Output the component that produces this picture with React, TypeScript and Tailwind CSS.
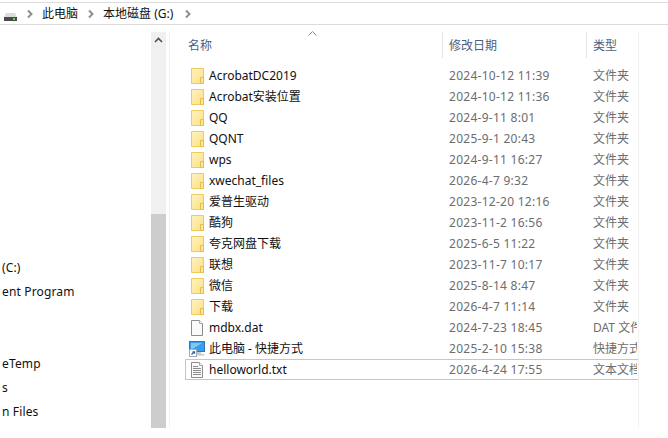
const rows = [
  ["folder", "AcrobatDC2019", "2024-10-12 11:39", "文件夹"],
  ["folder", "Acrobat安装位置", "2024-10-12 11:36", "文件夹"],
  ["folder", "QQ", "2024-9-11 8:01", "文件夹"],
  ["folder", "QQNT", "2025-9-1 20:43", "文件夹"],
  ["folder", "wps", "2024-9-11 16:27", "文件夹"],
  ["folder", "xwechat_files", "2026-4-7 9:32", "文件夹"],
  ["folder", "爱普生驱动", "2023-12-20 12:16", "文件夹"],
  ["folder", "酷狗", "2023-11-2 16:56", "文件夹"],
  ["folder", "夸克网盘下载", "2025-6-5 11:22", "文件夹"],
  ["folder", "联想", "2023-11-7 10:17", "文件夹"],
  ["folder", "微信", "2025-8-14 8:47", "文件夹"],
  ["folder", "下载", "2026-4-7 11:14", "文件夹"],
  ["file", "mdbx.dat", "2024-7-23 18:45", "DAT 文件"],
  ["link", "此电脑 - 快捷方式", "2025-2-10 15:38", "快捷方式"],
  ["text", "helloworld.txt", "2026-4-24 17:55", "文本文档"],
];

const nav = ["(C:)", "ent Program", "", "", "eTemp", "s", "n Files"];

function FolderIcon() {
  return (
    <svg width="16" height="16" viewBox="0 0 16 16" className="shrink-0">
      <defs>
        <linearGradient id="folderFill" x1="0" y1="0" x2="1" y2="1">
          <stop offset="0" stopColor="#fff3c0" />
          <stop offset="1" stopColor="#fbdf83" />
        </linearGradient>
      </defs>
      <path d="M3.5 0.5H15.5V15.5H3.5Z" fill="url(#folderFill)" stroke="#eecb5f" />
      <path d="M12.5 15.5V9.5H15.5V15.5Z" fill="#fde69a" stroke="#e5bd48" />
    </svg>
  );
}

function FileIcon() {
  return (
    <svg width="16" height="16" viewBox="0 0 16 16" className="shrink-0">
      <path d="M3.5 0.5H11.5L14.5 3.5V15.5H3.5Z" fill="#fafafa" stroke="#8c8c8c" />
      <path d="M11.5 0.5V3.5H14.5" fill="#fff" stroke="#a8a8a8" />
    </svg>
  );
}

function TextIcon() {
  return (
    <svg width="16" height="16" viewBox="0 0 16 16" className="shrink-0">
      <path d="M3.5 0.5H11.5L14.5 3.5V15.5H3.5Z" fill="#fafafa" stroke="#8c8c8c" />
      <path d="M11.5 0.5V3.5H14.5" fill="#fff" stroke="#a8a8a8" />
      <path d="M5 4.5H10M5 6.5H13M5 8.5H13M5 10.5H13M5 12.5H13" stroke="#8a8a8a" />
    </svg>
  );
}

function LinkIcon() {
  return (
    <svg width="16" height="16" viewBox="0 0 16 16" className="shrink-0 overflow-visible">
      <rect x="1.5" y="0.5" width="15" height="10" fill="#3d9be8" stroke="#2a78c4" />
      <path d="M3 9V2H14Z" fill="#7cc7f5" />
      <path d="M6 11H13V13H16.5V14.5H5V13H6Z" fill="#c4ccd2" />
      <rect x="1.5" y="8.5" width="7" height="7" fill="#fff" stroke="#a8a8a8" />
      <path d="M3.5 13.5L6 11M4.5 10.8H6.5V12.8" stroke="#1f5fb5" strokeWidth="1.2" fill="none" />
    </svg>
  );
}

function DriveIcon() {
  return (
    <svg width="16" height="16" viewBox="0 0 16 16" className="shrink-0">
      <path d="M3 7H12L14 11H1Z" fill="#dcdcdc" />
      <rect x="1" y="11" width="13" height="4" fill="#4a4a4a" />
      <rect x="10" y="12" width="2" height="2" fill="#4fdc5c" />
    </svg>
  );
}

function Chevron() {
  return (
    <svg width="6" height="10" viewBox="0 0 6 10" className="shrink-0">
      <path d="M1 1.5L4.5 5L1 8.5" stroke="#8f8f8f" strokeWidth="2" fill="none" />
    </svg>
  );
}

function RowIcon({ kind }: { kind: string }) {
  if (kind === "folder") return <FolderIcon />;
  if (kind === "file") return <FileIcon />;
  if (kind === "link") return <LinkIcon />;
  return <TextIcon />;
}

export default function App() {
  return (
    <div className="flex h-[438px] w-[668px] flex-col overflow-hidden bg-white text-[12px] font-['Noto_Sans','Noto_Sans_CJK_SC',sans-serif] leading-[16px] text-[#101010]">
      <div className="mt-[2px] flex h-[23px] items-center border-y border-[#dcdcdc]">
        <div className="ml-[3px] flex items-center">
          <DriveIcon />
          <div className="ml-[8px]"><Chevron /></div>
          <span className="ml-[9px]">此电脑</span>
          <div className="ml-[10px]"><Chevron /></div>
          <span className="ml-[9px]">本地磁盘 (G:)</span>
          <div className="ml-[12px]"><Chevron /></div>
        </div>
      </div>
      <div className="mt-[7px] flex h-[396px]">
        <div className="flex w-[151px] flex-col overflow-hidden pl-[2px] pt-[224px]">
          {nav.map((t, i) => (
            <div key={i} className="flex h-[24px] shrink-0 items-center whitespace-nowrap tracking-[0.15px]">{t}</div>
          ))}
        </div>
        <div className="flex w-[15px] flex-col bg-[#f0f0f0]">
          <div className="flex h-[182px] justify-center pt-[5px]">
            <svg width="9" height="6" viewBox="0 0 9 6">
              <path d="M1 5L4.5 1.5L8 5" stroke="#505050" strokeWidth="1.6" fill="none" />
            </svg>
          </div>
          <div className="flex-1 bg-[#cdcdcd]"></div>
        </div>
        <div className="ml-[3px] w-[470px] border-x border-[#f0f0f0] pl-[15px]">
          <div className="relative flex h-[26px] text-[#4c607a]">
            <svg width="9" height="5" viewBox="0 0 9 5" className="absolute left-[123px] top-[-1px]">
              <path d="M0.5 4.5L4.5 0.5L8.5 4.5" stroke="#8a8a8a" fill="none" />
            </svg>
            <div className="w-[257px] pl-[3px] pt-[6px]">名称</div>
            <div className="w-[144px] border-l border-[#e5e5e5] pl-[6px] pt-[6px]">修改日期</div>
            <div className="flex-1 border-l border-[#e5e5e5] pl-[6px] pt-[6px]">类型</div>
          </div>
          <div className="mt-[7px] flex flex-col">
            {rows.map(([kind, name, date, type]) => {
              const sel = kind === "text";
              return (
                <div key={name} className={`flex h-[21px] items-center ${sel ? "shadow-[inset_0_1px_0_#99d1ff,inset_0_-1px_0_#99d1ff,inset_1px_0_0_#99d1ff]" : ""}`}>
                  <div className="ml-[3px] -mr-[3px] flex w-[257px] items-center gap-[5px]">
                    <RowIcon kind={kind} />
                    <span className="whitespace-nowrap">{name}</span>
                  </div>
                  <div className="w-[144px] pl-[7px] tracking-[0.27px] text-[#6d6d6d]">{date}</div>
                  <div className="w-[51px] overflow-hidden whitespace-nowrap pl-[7px] text-[#6d6d6d]">{type}</div>
                </div>
              );
            })}
          </div>
        </div>
      </div>
    </div>
  );
}
